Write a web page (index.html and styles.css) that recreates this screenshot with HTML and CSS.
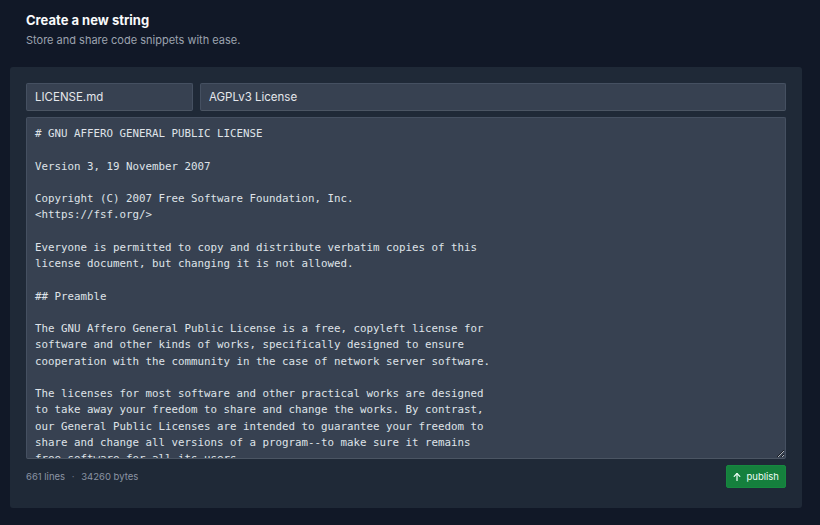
FILE: index.html
```html
<!DOCTYPE html>
<html lang="en">
<head>
    <meta charset="UTF-8">
    <meta name="viewport" content="width=device-width, initial-scale=1.0">
    <title>Create a new string</title>
    <link rel="stylesheet" href="styles.css">
</head>
<body>

    <header class="page-head">
        <h1>Create a new string</h1>
        <p>Store and share code snippets with ease.</p>
    </header>

    <form class="editor-card" id="stringForm">
        <div class="field-row">
            <input type="text" class="field filename" id="filename" value="LICENSE.md">
            <input type="text" class="field title" id="title" value="AGPLv3 License">
        </div>

        <textarea class="code" id="content" spellcheck="false"># GNU AFFERO GENERAL PUBLIC LICENSE

Version 3, 19 November 2007

Copyright (C) 2007 Free Software Foundation, Inc.
&lt;https://fsf.org/&gt;

Everyone is permitted to copy and distribute verbatim copies of this
license document, but changing it is not allowed.

## Preamble

The GNU Affero General Public License is a free, copyleft license for
software and other kinds of works, specifically designed to ensure
cooperation with the community in the case of network server software.

The licenses for most software and other practical works are designed
to take away your freedom to share and change the works. By contrast,
our General Public Licenses are intended to guarantee your freedom to
share and change all versions of a program--to make sure it remains
free software for all its users.

When we speak of free software, we are referring to freedom, not
price. Our General Public Licenses are designed to make sure that you
have the freedom to distribute copies of free software (and charge for
them if you wish), that you receive source code or can get it if you
want it, that you can change the software or use pieces of it in new
free programs, and that you know you can do these things.
</textarea>

        <div class="card-foot">
            <span class="stats">661 lines <span class="dot">·</span> 34260 bytes</span>
            <button type="submit" class="publish">
                <svg width="10" height="10" viewBox="0 0 16 16" fill="none" stroke="currentColor" stroke-width="2" stroke-linecap="round" stroke-linejoin="round">
                    <path d="M8 13.5V2.5"/>
                    <path d="M3.5 7L8 2.5 12.5 7"/>
                </svg>
                publish
            </button>
        </div>
    </form>

</body>
</html>
```

FILE: styles.css
```css
body {
    margin: 0;
    padding: 12px 18px 16px 10px;
    background-color: #111827;
    font-family: Inter, "Noto Sans", sans-serif;
    color: #f3f4f6;
}
.page-head {
    padding: 0 16px;
    margin-bottom: 20px;
}
.page-head h1 {
    margin: 0;
    font-size: 13px;
    font-weight: 700;
    line-height: 16px;
    color: #f9fafb;
}
.page-head p {
    margin: 5px 0 0;
    font-size: 11px;
    line-height: 14px;
    color: #9ca3af;
}
.editor-card {
    background-color: #1f2937;
    border-radius: 3px;
    padding: 16px 16px 20px;
    display: flex;
    flex-direction: column;
    gap: 6px;
}
.field-row {
    display: flex;
    gap: 7px;
}
.field {
    box-sizing: border-box;
    height: 28px;
    padding: 0 8px;
    background-color: #374151;
    border: 1px solid #455061;
    border-bottom-color: #4b5563;
    border-radius: 2px;
    font-family: Inter, "Noto Sans", sans-serif;
    font-size: 11.5px;
    color: #e5e7eb;
    outline: none;
}
.filename {
    width: 167px;
}
.title {
    flex: 1;
}
.code {
    box-sizing: border-box;
    height: 342px;
    padding: 8px 8px 7px;
    background-color: #374151;
    border: 1px solid #455061;
    border-bottom-color: #4b5563;
    border-radius: 2px;
    font-family: "DejaVu Sans Mono", "Liberation Mono", monospace;
    font-size: 10.8px;
    line-height: 16.25px;
    color: #dfe3e8;
    resize: vertical;
    outline: none;
    overflow: hidden;
}
.card-foot {
    display: flex;
    justify-content: space-between;
    align-items: center;
}
.stats {
    font-size: 9.5px;
    color: #8b94a3;
}
.stats .dot {
    margin: 0 4px;
    color: #6b7280;
}
.publish {
    display: flex;
    align-items: center;
    gap: 5px;
    height: 23px;
    padding: 0 6px 0 5px;
    background-color: #15803d;
    border: 1px solid #16883f;
    border-radius: 2px;
    font-family: Inter, "Noto Sans", sans-serif;
    font-size: 9.5px;
    color: #ecfdf5;
    cursor: pointer;
}
```
